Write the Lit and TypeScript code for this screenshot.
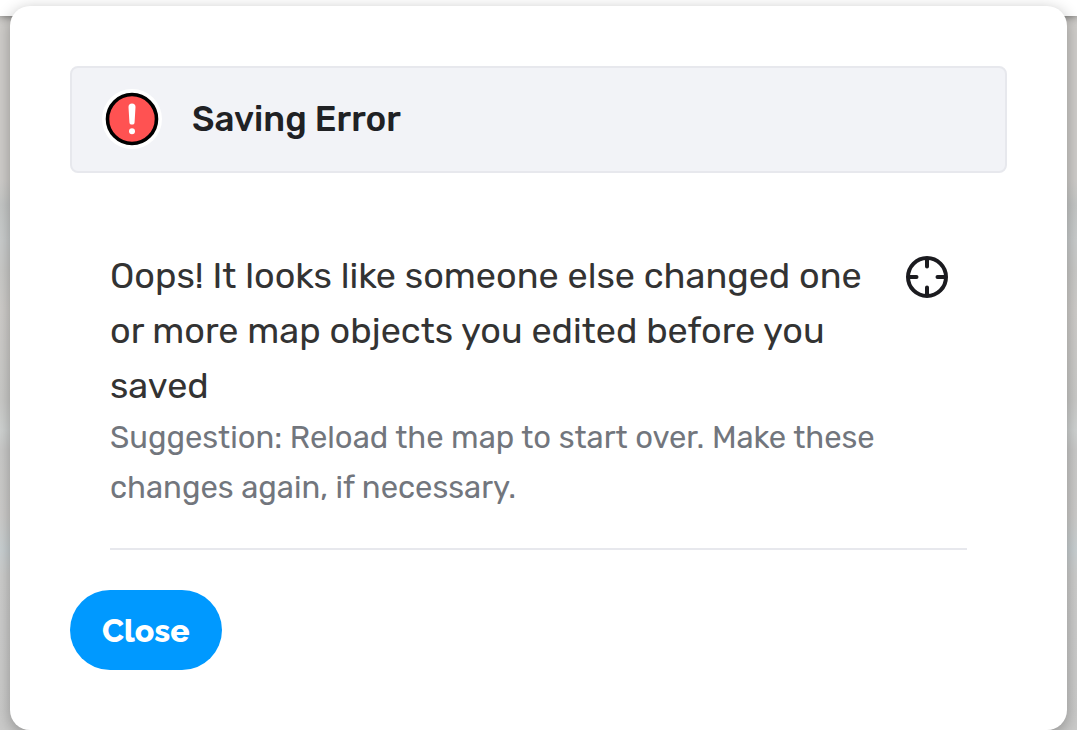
import { LitElement, html, css } from "lit";
import { customElement } from "lit/decorators.js";

@customElement("app-root")
export class AppRoot extends LitElement {
  static styles = css`
    :host {
      display: block;
      font-family: Rubik, Inter, Roboto, sans-serif;
    }
    *,
    *::before {
      box-sizing: border-box;
    }
    .page {
      position: relative;
      min-height: 100vh;
      padding: 6px 10px 0;
      overflow: hidden;
      background: linear-gradient(
        180deg,
        #d0cecb 0,
        #d0cecb 180px,
        #c6c8c7 205px,
        #cbcece 240px,
        #cbcbc9 270px,
        #d0cecb 310px,
        #cbcbc9 400px,
        #d1d4d3 430px,
        #cbcbca 450px,
        #cecdcb 515px,
        #cad1d3 550px,
        #cececd 575px,
        #cbcbca 100%
      );
    }
    .topbar {
      position: absolute;
      inset: 0 0 auto 0;
      height: 16px;
      background: #ffffff;
      box-shadow: 0 0 10px rgba(0, 0, 0, 0.6);
    }
    .dialog {
      position: relative;
      padding: 60px;
      border-radius: 20px;
      background: #ffffff;
      box-shadow: 0 4px 16px rgba(0, 0, 0, 0.3);
    }
    .header {
      display: flex;
      align-items: center;
      gap: 30px;
      padding: 20px 30px 21px;
      border: 2px solid #e7e8ed;
      border-radius: 8px;
      background: #f2f3f7;
    }
    .badge {
      display: block;
      flex: none;
      width: 60px;
      height: 60px;
    }
    h1 {
      margin: 0;
      font-size: 35px;
      line-height: 62px;
      font-weight: 500;
      color: #202124;
    }
    .conflicts {
      list-style: none;
      margin: 0;
      padding: 75px 40px 40px;
    }
    .conflict {
      display: flex;
      align-items: flex-start;
      gap: 15px;
      padding-bottom: 35px;
      border-bottom: 2px solid #e7e8ed;
    }
    .text {
      flex: 1;
      min-width: 0;
    }
    p {
      margin: 0;
    }
    .message {
      font-size: 36px;
      line-height: 55px;
      color: #333333;
    }
    .hint {
      font-size: 31px;
      line-height: 50px;
      color: #72767d;
    }
    button {
      font-family: inherit;
      border: 0;
      cursor: pointer;
    }
    .locate {
      flex: none;
      width: 60px;
      height: 60px;
      padding: 0;
      background: none;
    }
    .locate svg {
      display: block;
      width: 60px;
      height: 60px;
      overflow: visible;
    }
    .close {
      display: block;
      height: 80px;
      padding: 0 32px;
      border-radius: 40px;
      background: #0099ff;
      color: #ffffff;
      font-family: Raleway, Lato, sans-serif;
      font-size: 32px;
      font-weight: 800;
    }
  `;

  render() {
    return html`
      <div class="page">
        <div class="topbar"></div>
        <section class="dialog" role="dialog" aria-labelledby="title">
          <header class="header">
            <svg class="badge" viewBox="0 0 60 60" aria-hidden="true">
              <circle cx="30" cy="30" r="30" fill="#fff" />
              <circle cx="30" cy="30" r="24.5" fill="#ff5252" stroke="#000" stroke-width="3.6" />
              <path d="M26.500 18a3.500 3.500 0 0 1 7 0L32.600 33a2.600 2.600 0 0 1-5.200 0Z" fill="#fff" />
              <circle cx="30" cy="42.300" r="3" fill="#fff" />
            </svg>
            <h1 id="title">Saving Error</h1>
          </header>
          <ul class="conflicts">
            <li class="conflict">
              <div class="text">
                <p class="message">
                  Oops! It looks like someone else changed one or more map objects you edited before you saved
                </p>
                <p class="hint">
                  Suggestion: Reload the map to start over. Make these changes again, if necessary.
                </p>
              </div>
              <button class="locate" type="button" aria-label="Show on map">
                <svg viewBox="0 0 60 60" fill="none" stroke="#1b1b1f" stroke-width="4" stroke-linecap="round" aria-hidden="true">
                  <circle cx="20" cy="29" r="19" />
                  <path d="M20 12v6.500M20 39.500v6.500M3 29h6.500M30.500 29h6.500" />
                </svg>
              </button>
            </li>
          </ul>
          <button class="close" type="button">Close</button>
        </section>
      </div>
    `;
  }
}
